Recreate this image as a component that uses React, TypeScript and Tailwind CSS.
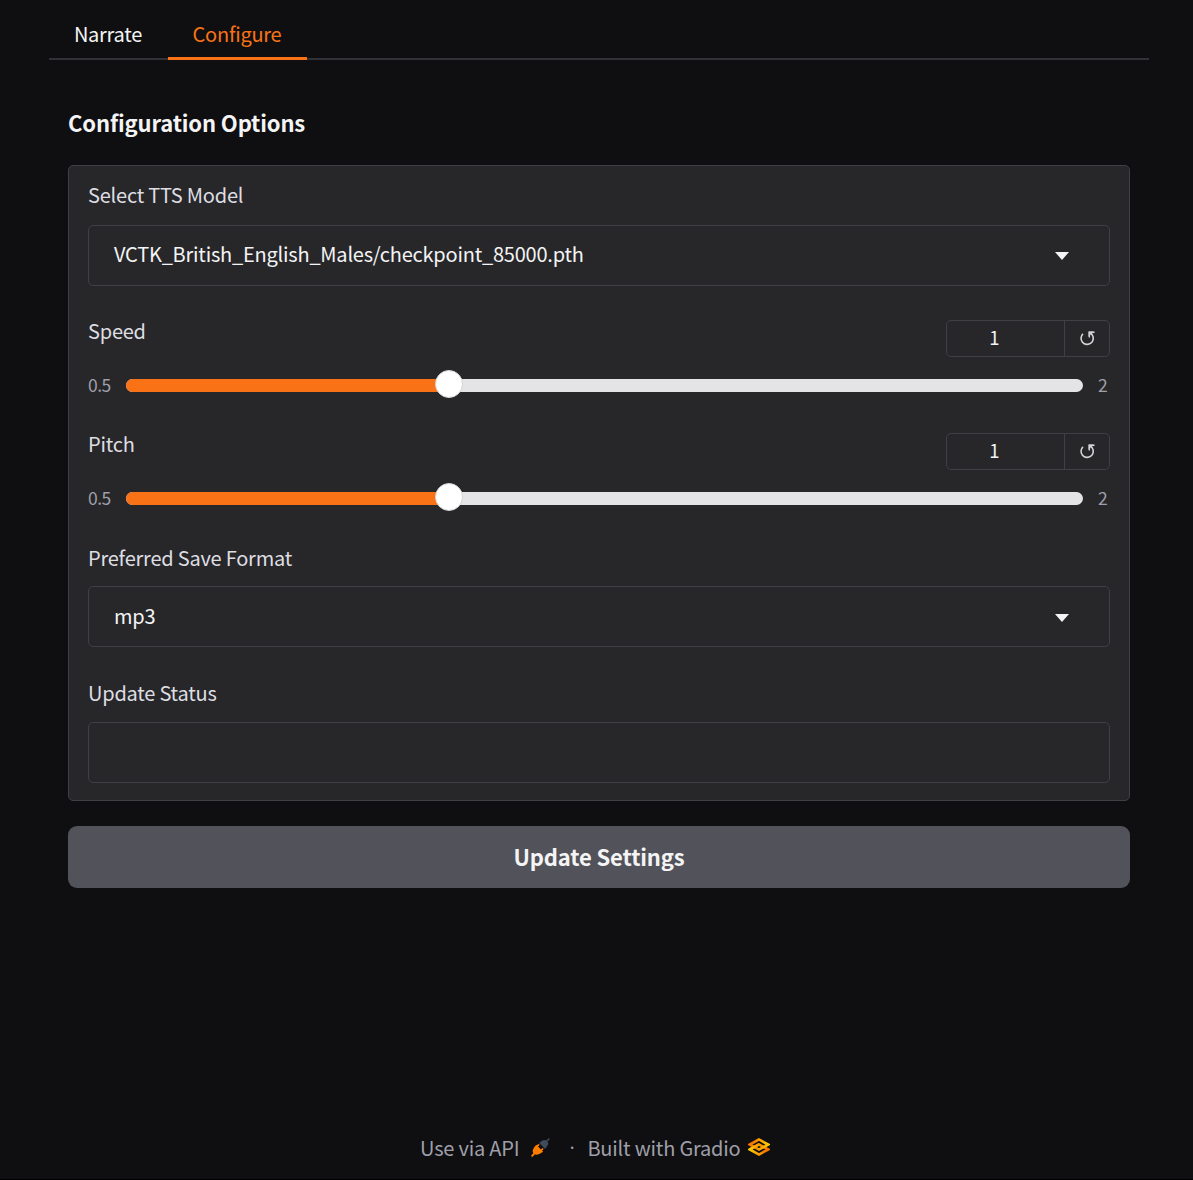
import { useState } from "react";

function Label({ children }: { children: string }) {
  return <div className="h-[30px] text-[20px] leading-[30px] tracking-[-0.22px] text-[#dedee2]">{children}</div>;
}

function Select({ value, raised = false }: { value: string; raised?: boolean }) {
  return (
    <button className="flex h-[61px] w-full items-center justify-between rounded-[5px] border border-[#3f3f46] pr-[40px] pl-[25px] text-left text-[20px] leading-[30px] tracking-[-0.22px] text-zinc-100">
      <span className={raised ? "-mt-[3px]" : "-mt-[2px]"}>{value}</span>
      <svg className={`h-[8px] w-[14px] ${raised ? "mt-[1px]" : "mt-[3px]"}`} viewBox="0 0 14 8" fill="currentColor">
        <path d="M0 0H14L7 8Z" />
      </svg>
    </button>
  );
}

function ResetIcon() {
  return (
    <svg className="h-[15px] w-[15px]" viewBox="0 0 14 14" fill="none">
      <path d="M2.8 2.6A5.7 5.7 0 1 0 11.4 3.6L9.6 1.8" stroke="currentColor" strokeWidth="1.5" />
      <path d="M8 0.5H13.6V1.8L9.4 2V6H8Z" fill="currentColor" />
      <path d="M8 0.5H12.6L8 5.2Z" fill="currentColor" />
    </svg>
  );
}

function RangeField({ label }: { label: string }) {
  const [value, setValue] = useState(1);
  const percent = ((value - 0.5) / 1.5) * 100;
  return (
    <div className="h-[79px]">
      <div className="flex justify-between">
        <div className="-mt-[4px] h-[30px]">
          <Label>{label}</Label>
        </div>
        <div className="flex h-[37px] w-[164px] rounded-[5px] border border-[#3f3f46] text-zinc-100">
          <input
            className="w-[117px] bg-transparent pr-[22px] pb-[2px] text-center text-[18.5px] outline-none"
            value={value}
            onChange={(e) => setValue(Number(e.target.value))}
          />
          <button
            aria-label="Reset"
            className="flex flex-1 items-center justify-center border-l border-[#3f3f46] text-zinc-300"
            onClick={() => setValue(1)}
          >
            <ResetIcon />
          </button>
        </div>
      </div>
      <div className="mt-[14px] flex h-[28px] items-center text-[17.5px] leading-[28px] tracking-[-0.5px] text-zinc-400">
        <span className="w-[38px]">0.5</span>
        <div className="relative h-[13px] w-[957px] rounded-full bg-[#e4e4e7]">
          <div className="h-full rounded-l-full bg-[#f97316]" style={{ width: `${percent + 0.5}%` }} />
          <div
            className="absolute -top-[9px] size-[28px] rounded-full border border-[#d4d4d8] bg-white"
            style={{ left: `calc(${percent}% - 10px)` }}
          />
        </div>
        <span className="ml-[15px]">2</span>
      </div>
    </div>
  );
}

function PlugIcon() {
  return (
    <svg className="-mt-[1px] mr-[19px] ml-[12px] h-[19px] w-[19px]" viewBox="0 0 20 20">
      <path d="M18.8 1.2 16.5 3.5" stroke="#3f4a5c" strokeWidth="1.6" strokeLinecap="round" />
      <path d="M8.6 5.2 11.2 3.2Q14.5 1 17 3.3T16.6 9L14.9 11.5Z" fill="#3f4a5c" />
      <path d="M6.5 8.6 8 7.2M10.7 13.1 12.2 11.6" stroke="#ff7c00" strokeWidth="1.8" strokeLinecap="round" />
      <path d="M1.3 18.7 3.5 16.5" stroke="#ff7c00" strokeWidth="2" strokeLinecap="round" />
      <path d="M5.6 7.2 12.8 14.4 9.8 16.4Q6 18.6 3.2 16.6T3.2 10Z" fill="#ff7c00" />
    </svg>
  );
}

function GradioLogo() {
  return (
    <svg
      className="-mt-[3px] ml-[8px] h-[18px] w-[22px]"
      viewBox="44 82 487 412"
      preserveAspectRatio="none"
      fill="none"
      strokeWidth="59"
      strokeLinejoin="miter"
    >
      <defs>
        <linearGradient id="lower" x1="60" y1="341" x2="429" y2="344" gradientUnits="userSpaceOnUse">
          <stop stopColor="#f9d100" />
          <stop offset="1" stopColor="#f97700" />
        </linearGradient>
        <linearGradient id="upper" x1="513" y1="231" x2="143" y2="231" gradientUnits="userSpaceOnUse">
          <stop stopColor="#f9d100" />
          <stop offset="1" stopColor="#f97700" />
        </linearGradient>
      </defs>
      <path d="M287.5 229 86 344.5 287.5 460 489 344.5Z" stroke="url(#lower)" />
      <path d="M287.5 116 86 231.5 287.5 347 489 231.5Z" stroke="url(#upper)" />
      <path d="M86 344 288 229" stroke="url(#lower)" />
    </svg>
  );
}

export default function App() {
  return (
    <div className="flex h-[1180px] flex-col border-b border-black bg-[#0f0f11] font-['Noto_Sans_CJK_SC',sans-serif] text-zinc-100">
      <nav className="ml-[49px] flex h-[60px] w-[1100px] items-end text-[20px] leading-[30px] tracking-[-0.25px] shadow-[inset_0_-2px_0_#323236]">
        <button className="h-[60px] w-[119px] pt-[7px] pr-[1px]">Narrate</button>
        <button className="h-[60px] w-[139px] border-b-[3px] border-[#f97316] pt-[10px] pr-[1px] text-[#f97316]">
          Configure
        </button>
      </nav>
      <main className="ml-[68px] w-[1062px]">
        <h1 className="mt-[46px] h-[32px] text-[22px] leading-[32px] font-bold tracking-[-0.13px]">
          Configuration Options
        </h1>
        <section className="mt-[27px] h-[636px] rounded-[5px] border border-[#3f3f46] bg-[#27272a] px-[19px] pt-[14px]">
          <Label>Select TTS Model</Label>
          <div className="mt-[15px]">
            <Select value="VCTK_British_English_Males/checkpoint_85000.pth" raised />
          </div>
          <div className="mt-[34px]">
            <RangeField label="Speed" />
          </div>
          <div className="mt-[34px]">
            <RangeField label="Pitch" />
          </div>
          <div className="mt-[31px]">
            <Label>Preferred Save Format</Label>
          </div>
          <div className="mt-[13px]">
            <Select value="mp3" />
          </div>
          <div className="mt-[31px]">
            <Label>Update Status</Label>
          </div>
          <div className="mt-[14px] h-[61px] rounded-[5px] border border-[#3f3f46]" />
        </section>
        <button className="mt-[25px] h-[62px] w-full rounded-[9px] bg-[#52525b] pb-[2px] text-[22px] leading-[32px] font-bold tracking-[-0.13px]">
          Update Settings
        </button>
      </main>
      <footer className="mt-auto mb-[16px] ml-[420px] flex h-[30px] items-center text-[20px] leading-[30px] tracking-[-0.2px] text-zinc-400">
        <span>Use via API</span>
        <PlugIcon />
        <span className="w-[18px] font-['Open_Sans']">·</span>
        <span>Built with Gradio</span>
        <GradioLogo />
      </footer>
    </div>
  );
}
